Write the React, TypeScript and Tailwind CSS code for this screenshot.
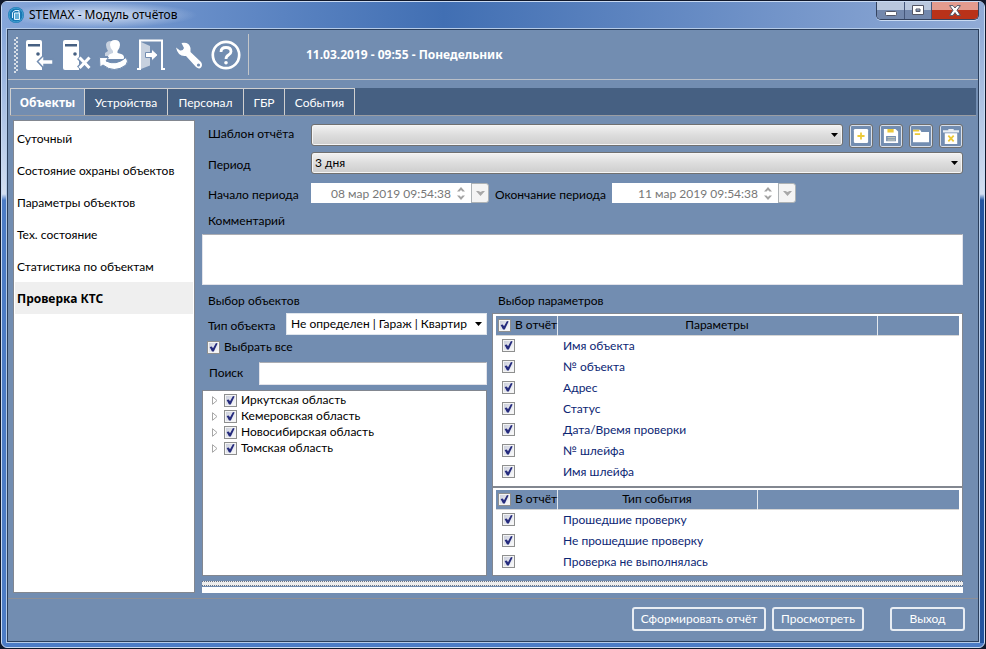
import { useState } from "react";
import type { ReactNode } from "react";

const tabs = [
  { name: "Объекты", width: "w-[75px]" },
  { name: "Устройства", width: "w-[83px]" },
  { name: "Персонал", width: "w-[76px]" },
  { name: "ГБР", width: "w-[41px]" },
  { name: "События", width: "w-[70px]" },
];

const reports = [
  "Суточный",
  "Состояние охраны объектов",
  "Параметры объектов",
  "Тех. состояние",
  "Статистика по объектам",
  "Проверка КТС",
];

const regions = ["Иркутская область", "Кемеровская область", "Новосибирская область", "Томская область"];

const parameters = [
  "Имя объекта",
  "№ объекта",
  "Адрес",
  "Статус",
  "Дата/Время проверки",
  "№ шлейфа",
  "Имя шлейфа",
];

const events = ["Прошедшие проверку", "Не прошедшие проверку", "Проверка не выполнялась"];

function Check({ id, label }: { id?: string; label?: string }) {
  return (
    <span className="inline-grid size-[13px] shrink-0">
      <input
        id={id}
        type="checkbox"
        defaultChecked
        aria-label={label}
        className="peer col-start-1 row-start-1 size-[13px] appearance-none border border-[#8e8f8f] bg-linear-to-br from-[#c6cad8] to-white shadow-[inset_0_0_0_1px_#f4f4f4]"
      />
      <svg
        viewBox="0 0 13 13"
        className="pointer-events-none invisible col-start-1 row-start-1 size-[13px] peer-checked:visible"
        aria-hidden="true"
      >
        <path d="M2.600 6 4.800 5.400 6 7.200 9 2 10.600 2.600 6.800 10.600 5 10.600Z" fill="#252b7d" />
      </svg>
    </span>
  );
}

function Combo({
  id,
  label,
  options,
  className,
  plain,
}: {
  id: string;
  label?: string;
  options: string[];
  className: string;
  plain?: boolean;
}) {
  return (
    <span className={`grid h-[22px] ${className}`}>
      <select
        id={id}
        aria-label={label}
        className={
          plain
            ? "col-start-1 row-start-1 w-full min-w-0 appearance-none border border-[#dfe5ec] bg-white pr-4 pl-1 text-[12px] text-black"
            : "col-start-1 row-start-1 w-full min-w-0 appearance-none rounded-[3px] border border-[#707070] bg-linear-to-b from-[#f2f2f2] from-0% via-[#dddddd] via-50% to-[#cdcdcd] pr-5 pl-[3px] text-[12px] text-black shadow-[inset_0_0_0_1px_#f5f5f5]"
        }
      >
        {options.map((o) => (
          <option key={o}>{o}</option>
        ))}
      </select>
      <svg
        viewBox="0 0 7 4"
        className="pointer-events-none col-start-1 row-start-1 mr-[5px] h-1 w-[7px] self-center justify-self-end"
        aria-hidden="true"
      >
        <path d="M0 0H7L3.5 4Z" fill="#000" />
      </svg>
    </span>
  );
}

function DateBox({ id, value, className }: { id: string; value: string; className: string }) {
  return (
    <span className={`flex h-5 ${className}`}>
      <span className="flex min-w-0 flex-1 items-center bg-white">
        <input
          id={id}
          defaultValue={value}
          className="h-full w-full min-w-0 bg-transparent text-right text-[12px] text-[#777777] outline-none"
        />
        <span className="flex w-5 shrink-0 flex-col items-center gap-[3px]">
          <button type="button" aria-label="Больше" className="block">
            <svg viewBox="0 0 8 5" className="block h-[5px] w-2">
              <path d="M0 4.5 4 0 8 4.5H5.5L4 3 2.500 4.500Z" fill="#a3a3a3" />
            </svg>
          </button>
          <button type="button" aria-label="Меньше" className="block">
            <svg viewBox="0 0 8 5" className="block h-[5px] w-2">
              <path d="M0 .5H2.500L4 2 5.500 .5H8L4 5Z" fill="#a3a3a3" />
            </svg>
          </button>
        </span>
      </span>
      <button
        type="button"
        aria-label="Открыть календарь"
        className="flex w-[18px] shrink-0 items-center justify-center rounded-r-[3px] border border-[#adb2b5] bg-[#f4f4f4]"
      >
        <svg viewBox="0 0 9 5" className="h-[5px] w-[9px]">
          <path d="M0 0H2.500L4.500 1 6.500 0H9L4.500 5Z" fill="#a8a8a8" />
        </svg>
      </button>
    </span>
  );
}

function ReportTable({
  title,
  rows,
  titleWidth,
  className,
}: {
  title: string;
  rows: string[];
  titleWidth: string;
  className: string;
}) {
  return (
    <div className={`border border-[#828790] bg-white px-[3px] pt-[2px] ${className}`}>
      <table className="w-full table-fixed border-collapse">
        <colgroup>
          <col className="w-[61px]" />
          <col className={titleWidth} />
          <col />
        </colgroup>
        <thead>
          <tr className="h-[19px] border-b border-[#d5d5d5] bg-[#728db1]">
            <th className="border-r border-[#e3e8ee] p-0 text-left font-normal">
              <label className="flex items-center gap-1 pl-[2px] leading-[18px] whitespace-nowrap">
                <Check />В отчёт
              </label>
            </th>
            <th className="border-r border-[#e3e8ee] p-0 leading-[18px] font-normal">{title}</th>
            <th className="p-0" />
          </tr>
        </thead>
        <tbody className="text-[#0c2674]">
          {rows.map((r) => (
            <tr key={r} className="h-[21px]">
              <td className="p-0 pb-[2px] pl-[6px]">
                <span className="flex">
                  <Check label={r} />
                </span>
              </td>
              <td className="p-0 pb-px pl-[6px] leading-5 whitespace-nowrap" colSpan={2}>
                {r}
              </td>
            </tr>
          ))}
        </tbody>
      </table>
    </div>
  );
}

function ToolIcon({ label, children }: { label: string; children: ReactNode }) {
  return (
    <button type="button" aria-label={label} className="flex size-8 shrink-0 items-center justify-center">
      <svg viewBox="0 0 32 32" className="size-8">
        {children}
      </svg>
    </button>
  );
}

function Server() {
  return (
    <>
      <path d="M2 3Q2 1 4 1H16Q18 1 18 3V31H4Q2 31 2 29Z" fill="#fff" />
      <path d="M4 5H16V7.500H4Z" fill="#466082" />
      <circle cx="14" cy="15" r="1.800" fill="#466082" />
    </>
  );
}

function SmallButton({ label, children }: { label: string; children: ReactNode }) {
  return (
    <button
      type="button"
      aria-label={label}
      className="flex size-6 shrink-0 items-center justify-center rounded-[3px] border border-[#707070] shadow-[inset_0_0_0_1px_#d9e0ea]"
    >
      <svg viewBox="0 0 18 18" className="size-4">
        {children}
      </svg>
    </button>
  );
}

const footerButton =
  "h-6 rounded-[3px] border-2 border-[#e8edf3] text-[12px] leading-5 whitespace-nowrap text-white";

export default function App() {
  const [tab, setTab] = useState("Объекты");
  const [report, setReport] = useState("Проверка КТС");

  return (
    <div className="h-screen min-h-[600px] bg-[#10182b] p-px font-['Lato','Noto_Sans',sans-serif] text-[12px] text-black">
      <div className="flex h-full flex-col overflow-hidden rounded-md border border-[#c9daf2] bg-[#4c7cc6]">
        <header className="flex h-[26px] shrink-0 justify-between bg-linear-to-r from-[#86a6d9] via-[#416fb3] via-45% to-[#91abd6]">
          <div className="flex items-center gap-[5px] bg-radial from-[#c7d6ee] from-10% to-transparent to-70% pr-5 pl-[6px]">
            <svg viewBox="0 0 16 16" className="size-4" aria-hidden="true">
              <circle cx="8" cy="8" r="8" fill="#1878b4" />
              <circle cx="8" cy="8" r="7" fill="none" stroke="#48a4d3" />
              <path d="M4.500 11V5.500L7 3.500H11V10" fill="none" stroke="#d8efff" />
              <path d="M6.500 6H11.500V12.500H6.500Z" fill="#66afd7" stroke="#e4f5ff" />
            </svg>
            <h1 className="font-['Noto_Sans',sans-serif] whitespace-nowrap">STEMAX - Модуль отчётов</h1>
          </div>
          <div className="mr-[5px] flex h-[18px] w-[103px] overflow-hidden rounded-b-[5px] border border-t-0 border-[#34435f] shadow-[0_1px_0_#c9daf2]">
            <button
              type="button"
              aria-label="Свернуть"
              className="flex w-7 items-center justify-center border-r border-[#44567a] bg-linear-to-b from-[#b9c7dd] from-45% to-[#7388ad] to-50%"
            >
              <svg viewBox="0 0 12 11" className="h-[11px] w-3">
                <rect x="0.500" y="6.500" width="11" height="4" rx="1" fill="#fff" stroke="#535666" />
              </svg>
            </button>
            <button
              type="button"
              aria-label="Развернуть"
              className="flex w-[27px] items-center justify-center border-r border-[#44567a] bg-linear-to-b from-[#b9c7dd] from-45% to-[#7388ad] to-50%"
            >
              <svg viewBox="0 0 12 11" className="h-[11px] w-3">
                <path
                  d="M.5 .5H11.500V9.500H.5ZM4 4V6.500H8V4Z"
                  fill="#fff"
                  fillRule="evenodd"
                  stroke="#535666"
                />
              </svg>
            </button>
            <button
              type="button"
              aria-label="Закрыть"
              className="flex flex-1 items-center justify-center bg-linear-to-b from-[#e39b8e] from-45% to-[#b93219] to-50%"
            >
              <svg viewBox="0 0 12 11" className="h-[11px] w-3">
                <path
                  d="M.6 .6H4L6 3 8 .6H11.400L8 5.300 11.400 10.400H8L6 7.600 4 10.400H.6L4 5.300Z"
                  fill="#fff"
                  stroke="#535666"
                />
              </svg>
            </button>
          </div>
        </header>

        <div className="flex min-h-0 flex-1">
          <div className="w-1 shrink-0 bg-linear-to-b from-[#86a6d9] from-0% via-[#d3dff1] via-27% to-[#4c7cc6] to-28%" />
          <main className="flex min-w-0 flex-1 flex-col border border-[#b5cbe8] bg-[#728db1]">
            <div className="flex min-h-0 flex-1 flex-col border border-[#2b3f5c]">
              <div className="flex h-[50px] shrink-0 items-center border-b border-[#b9bfc8] pl-[6px]">
                <div className="mr-[6px] h-9 w-1 bg-[repeating-conic-gradient(#d6dde6_0_25%,#728db1_0_50%)] bg-size-[4px_4px]" />
                <div className="flex items-center gap-[5px]">
                  <ToolIcon label="Подключиться к серверу">
                    <Server />
                    <path
                      d="M13.500 22.500 20 16V20.500H29V25.500H20V29.500Z"
                      fill="#fff"
                      stroke="#728db1"
                      strokeWidth="1.500"
                    />
                  </ToolIcon>
                  <ToolIcon label="Отключиться от сервера">
                    <Server />
                    <path d="M18 18 29 29.500M29 18 18 29.500" stroke="#728db1" strokeWidth="5.500" />
                    <path d="M18.500 18.500 28.500 29M28.500 18.500 18.500 29" stroke="#fff" strokeWidth="3" />
                  </ToolIcon>
                  <ToolIcon label="Сменить пользователя">
                    <g transform="translate(1 0)">
                      <path d="M6 17V14L9 12Q7 9 7 6Q7 2 12 2L16 4V17Z" fill="#c7d1df" />
                      <path
                        d="M9 18Q9 15 14 14V12Q11 9 11 6Q11 1 16 1T21 6Q21 9 18.500 12V14Q25 15 25 18V20H9Z"
                        fill="#fff"
                      />
                      <path
                        d="M.5 18.500H9.500L7 22Q17 27 27 18.500Q30 22 27 26Q15 35 4 26L1 28Z"
                        fill="#fff"
                        stroke="#728db1"
                        strokeWidth="1"
                      />
                    </g>
                  </ToolIcon>
                  <ToolIcon label="Выйти из системы">
                    <g transform="translate(2 0)">
                      <path d="M0 30H3V1.500H25V30H28" fill="none" stroke="#fff" strokeWidth="2" />
                      <path d="M4 3 13 7V26.500L4 30Z" fill="#c7d1df" />
                      <path
                        d="M8.500 13.500H14.500V10L21 16 14.500 22V18.500H8.500Z"
                        fill="#fff"
                        stroke="#728db1"
                        strokeWidth="1"
                      />
                    </g>
                  </ToolIcon>
                  <ToolIcon label="Настройки">
                    <g transform="translate(3 0)">
                      <path
                        d="M1 8.500 5 11.500Q8 12 9 9L6.500 4Q14 2.500 15.500 9V13L26 23Q28 26 26 28.500Q24 30.500 21 28L11 17Q3 18 1 8.500Z"
                        fill="#fff"
                      />
                      <circle cx="23.500" cy="26" r="1.600" fill="#728db1" />
                    </g>
                  </ToolIcon>
                  <ToolIcon label="Справка">
                    <circle cx="17" cy="16" r="13.200" fill="none" stroke="#fff" strokeWidth="2.700" />
                    <path
                      d="M12 13Q12 8.500 17 8.500T22 12.500Q22 14.500 19.500 16T17 20"
                      fill="none"
                      stroke="#fff"
                      strokeWidth="2.800"
                    />
                    <circle cx="17" cy="23.700" r="1.800" fill="#fff" />
                  </ToolIcon>
                </div>
                <div className="ml-[7px] h-[41px] w-px bg-[#c3c6ca]" />
                <time className="ml-[57px] font-['Noto_Sans',sans-serif] font-bold whitespace-nowrap text-white">
                  11.03.2019 - 09:55 - Понедельник
                </time>
              </div>

              <nav
                role="tablist"
                className="mt-2 mr-[2px] ml-[2px] flex h-7 shrink-0 border-b border-[#9a9da3] bg-[#466082]"
              >
                {tabs.map((t) => (
                  <button
                    key={t.name}
                    type="button"
                    role="tab"
                    aria-selected={tab === t.name}
                    onClick={() => setTab(t.name)}
                    className={`shrink-0 border-t border-r border-[#d0d0d0] pt-px text-white first:border-l ${t.width} ${
                      tab === t.name ? "bg-[#728db1] font-['Noto_Sans',sans-serif] font-bold" : ""
                    }`}
                  >
                    {t.name}
                  </button>
                ))}
              </nav>

              <div className="flex min-h-0 flex-1 gap-[7px] border-b border-[#8d8f96] pt-1 pr-[15px] pb-[5px] pl-[5px]">
                <ul className="w-[182px] shrink-0 border border-[#828790] bg-white px-px pt-px">
                  {reports.map((r) => (
                    <li key={r}>
                      <button
                        type="button"
                        onClick={() => setReport(r)}
                        className={`block h-8 w-full pt-[2px] pl-[2px] text-left whitespace-nowrap ${
                          report === r ? "bg-[#efefef] font-['Noto_Sans',sans-serif] font-bold" : ""
                        }`}
                      >
                        {r}
                      </button>
                    </li>
                  ))}
                </ul>

                <section className="flex min-w-0 flex-1 flex-col pt-1">
                  <div className="flex h-6 items-start">
                    <label htmlFor="template" className="w-[109px] shrink-0 pl-[6px] leading-5">
                      Шаблон отчёта
                    </label>
                    <Combo id="template" options={[""]} className="mr-[6px] min-w-0 flex-1" />
                    <div className="flex gap-[6px]">
                      <SmallButton label="Добавить шаблон">
                        <rect x="1" y="1" width="16" height="16" rx="1.500" fill="#fff" />
                        <path d="M9 5V13M5 9H13" stroke="#ecc938" strokeWidth="2" />
                      </SmallButton>
                      <SmallButton label="Сохранить шаблон">
                        <path d="M1 1H14L17 4V17H1Z" fill="#fff" />
                        <path d="M5 1H12V5H5Z" fill="#ecc938" />
                        <path d="M3.500 9H14.500V15H3.500Z" fill="#728db1" />
                        <path d="M5 11H13.500M5 13.500H13.500" stroke="#e9e3bd" />
                      </SmallButton>
                      <SmallButton label="Открыть шаблон">
                        <path d="M0 2H8L9.500 4.500H18V16H0Z" fill="#fff" />
                        <path d="M0 3H7M2 7H8" stroke="#ecc938" strokeWidth="2" />
                      </SmallButton>
                      <SmallButton label="Удалить шаблон">
                        <path d="M0 2.500H6V1H12V2.500H18V5H0Z" fill="#e9eef4" />
                        <path d="M2 6H16V18H2Z" fill="#fff" />
                        <path d="M6 8.500 12 15M12 8.500 6 15" stroke="#ecc938" strokeWidth="2" />
                      </SmallButton>
                    </div>
                  </div>

                  <div className="mt-1 flex h-[22px] items-start">
                    <label htmlFor="period" className="w-[109px] shrink-0 pl-[6px] leading-[26px]">
                      Период
                    </label>
                    <Combo id="period" options={["3 дня"]} className="min-w-0 flex-1" />
                  </div>

                  <div className="mt-[9px] flex h-6 items-start whitespace-nowrap">
                    <label htmlFor="start" className="w-[109px] shrink-0 pl-[6px] leading-6">
                      Начало периода
                    </label>
                    <DateBox id="start" value="08 мар 2019 09:54:38" className="w-[178px]" />
                    <label htmlFor="end" className="w-[123px] shrink-0 pl-[6px] leading-6">
                      Окончание периода
                    </label>
                    <DateBox id="end" value="11 мар 2019 09:54:38" className="w-[184px]" />
                  </div>

                  <label htmlFor="comment" className="mt-1 pl-[6px] leading-5">
                    Комментарий
                  </label>
                  <textarea
                    id="comment"
                    className="mt-[3px] h-[51px] w-full shrink-0 resize-none border border-t-[#abadb3] border-r-[#e2e3ea] border-b-[#e2e3ea] border-l-[#e2e3ea] bg-white"
                  />

                  <div className="flex min-h-0 flex-1 gap-[5px] pt-[6px]">
                    <div className="flex w-[285px] shrink-0 flex-col">
                      <h2 className="pl-[6px] leading-5">Выбор объектов</h2>
                      <div className="mt-[2px] flex h-[22px] items-start">
                        <label htmlFor="type" className="w-[84px] shrink-0 pl-[6px] leading-[26px] whitespace-nowrap">
                          Тип объекта
                        </label>
                        <Combo
                          id="type"
                          plain
                          options={["Не определен | Гараж | Квартир"]}
                          className="min-w-0 flex-1"
                        />
                      </div>
                      <label className="flex h-6 items-center gap-1 pl-[5px]">
                        <Check />
                        Выбрать все
                      </label>
                      <div className="mt-[3px] flex h-[23px]">
                        <label htmlFor="search" className="w-[57px] shrink-0 pl-[7px] leading-[22px]">
                          Поиск
                        </label>
                        <input
                          id="search"
                          type="text"
                          className="min-w-0 flex-1 border border-t-[#abadb3] border-r-[#e2e3ea] border-b-[#e2e3ea] border-l-[#e2e3ea] bg-white px-1"
                        />
                      </div>
                      <ul className="mt-[5px] min-h-0 flex-1 border border-[#828790] bg-white pt-px">
                        {regions.map((r) => (
                          <li key={r} className="flex h-4 items-center pl-[9px]">
                            <button type="button" aria-label="Развернуть" className="mr-[6px]">
                              <svg viewBox="0 0 6 9" className="block h-[9px] w-[6px]">
                                <path d="M.5 .7V8.300L5 4.500Z" fill="#fff" stroke="#a6a6a6" />
                              </svg>
                            </button>
                            <label className="flex items-center gap-1 leading-4">
                              <Check />
                              {r}
                            </label>
                          </li>
                        ))}
                      </ul>
                    </div>

                    <div className="flex min-w-0 flex-1 flex-col">
                      <h2 className="pl-[6px] leading-5">Выбор параметров</h2>
                      <ReportTable
                        title="Параметры"
                        rows={parameters}
                        titleWidth="w-[320px]"
                        className="mt-[2px] h-[174px] shrink-0"
                      />
                      <ReportTable
                        title="Тип события"
                        rows={events}
                        titleWidth="w-[200px]"
                        className="min-h-0 flex-1"
                      />
                    </div>
                  </div>

                  <div className="mt-[5px] h-[5px] shrink-0 border-y border-dotted border-[#687384] bg-[#ededed]" />
                  <div className="mt-px h-[6px] shrink-0 bg-white" />
                </section>
              </div>

              <footer className="flex h-[42px] shrink-0 items-start justify-end pt-2 pr-[13px]">
                <button type="button" className={`w-[134px] ${footerButton}`}>
                  Сформировать отчёт
                </button>
                <button type="button" className={`ml-[6px] w-[92px] ${footerButton}`}>
                  Просмотреть
                </button>
                <button type="button" className={`ml-[26px] w-[75px] ${footerButton}`}>
                  Выход
                </button>
              </footer>
            </div>
          </main>
          <div className="w-1 shrink-0 bg-linear-to-b from-[#91abd6] from-0% via-[#d3dff1] via-27% to-[#22549f] to-28%" />
        </div>
        <div className="h-1 shrink-0" />
      </div>
    </div>
  );
}
